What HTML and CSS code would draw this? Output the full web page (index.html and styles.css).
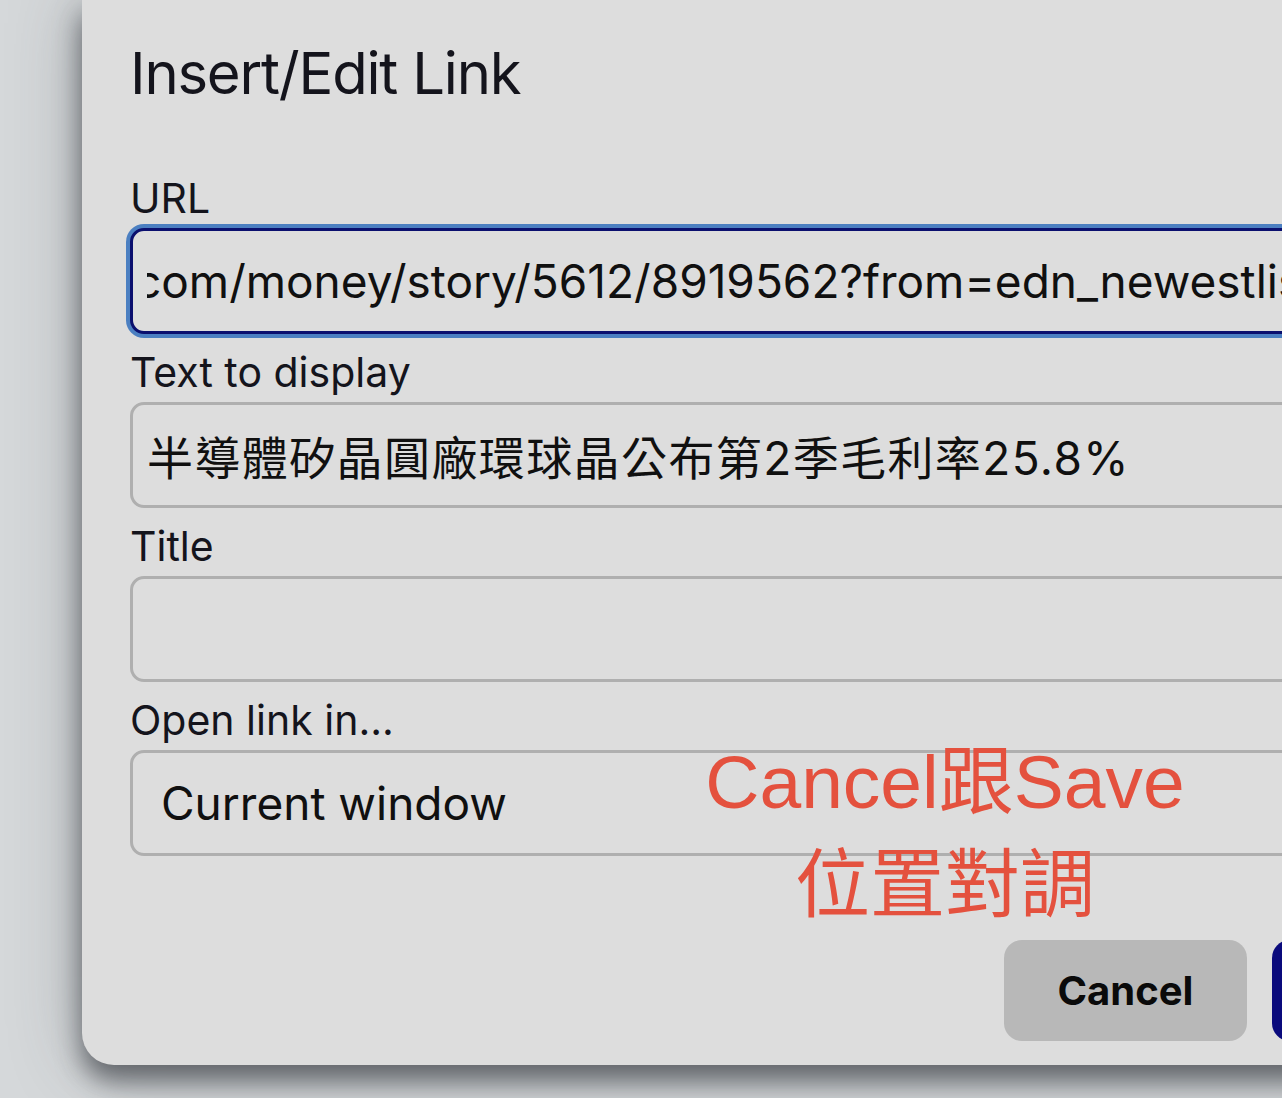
FILE: index.html
```html
<!DOCTYPE html>
<html lang="zh-Hant">
<head>
    <meta charset="UTF-8">
    <meta name="viewport" content="width=device-width, initial-scale=1.0">
    <title>Insert/Edit Link</title>
    <link rel="stylesheet" href="styles.css">
</head>
<body>
    <div class="stage">
        <div class="dialog">
            <h1 class="dialog-title">Insert/Edit Link</h1>

            <form class="link-form">
                <div class="field">
                    <label class="field-label" for="url">URL</label>
                    <div class="text-box is-focused" id="url">
                        <div class="text-clip"><span class="url-text">com/money/story/5612/8919562?from=edn_newestlist</span></div>
                    </div>
                </div>

                <div class="field">
                    <label class="field-label" for="display">Text to display</label>
                    <input class="text-box cjk-box" type="text" id="display" value="半導體矽晶圓廠環球晶公布第2季毛利率25.8%">
                </div>

                <div class="field">
                    <label class="field-label" for="title">Title</label>
                    <input class="text-box" type="text" id="title" value="">
                </div>

                <div class="field">
                    <label class="field-label" for="target">Open link in...</label>
                    <select class="text-box select-box" id="target">
                        <option>Current window</option>
                        <option>New window</option>
                    </select>
                </div>
            </form>

            <div class="dialog-footer">
                <button type="button" class="btn btn-cancel">Cancel</button>
                <button type="button" class="btn btn-save">Save</button>
            </div>
        </div>

        <!-- red note written over the screenshot -->
        <div class="note">Cancel跟Save<br>位置對調</div>
    </div>
</body>
</html>
```

FILE: styles.css
```css
body {
    margin: 0;
    padding: 0;
    background-color: #d5d8da;
    font-family: Inter, "Noto Sans CJK TC", sans-serif;
    color: #14141c;
    overflow: hidden;
}

.stage {
    position: relative;
    width: 1282px;
    height: 1098px;
    overflow: hidden;
}

.dialog {
    width: 1408px;
    margin-left: 82px;
    padding: 38px 48px 24px;
    box-sizing: border-box;
    background-color: #dddddd;
    border-radius: 0 0 32px 32px;
    box-shadow: 0 16px 26px rgba(40, 44, 50, 0.6), 0 0 70px rgba(60, 66, 72, 0.35);
}

.dialog-title {
    margin: 0;
    font-size: 58px;
    font-weight: 400;
    line-height: 70px;
    letter-spacing: -1.2px;
}

.link-form {
    display: flex;
    flex-direction: column;
    gap: 14px;
    margin-top: 66px;
}

.field {
    display: flex;
    flex-direction: column;
    gap: 6px;
}

.field-label {
    font-size: 41px;
    line-height: 48px;
}

.text-box {
    display: block;
    width: 100%;
    height: 106px;
    box-sizing: border-box;
    margin: 0;
    padding: 0 14px;
    background-color: #dddddd;
    border: 3px solid #afafaf;
    border-radius: 14px;
    font-family: Inter, "Noto Sans CJK TC", sans-serif;
    font-size: 46px;
    color: #101010;
    outline: none;
}

.cjk-box {
    letter-spacing: 1.4px;
}

.text-box.is-focused {
    border-color: #0a0f6e;
    box-shadow: 0 0 0 4px #4b7fc1;
    display: flex;
    align-items: center;
}

.text-clip {
    flex: 1;
    overflow: hidden;
    white-space: nowrap;
}

.url-text {
    display: inline-block;
    margin-left: -12px;
}

.select-box {
    appearance: none;
    -webkit-appearance: none;
    padding-left: 28px;
}

.dialog-footer {
    display: flex;
    justify-content: flex-end;
    gap: 25px;
    margin-top: 84px;
}

.btn {
    height: 101px;
    border: none;
    border-radius: 18px;
    font-family: Inter, sans-serif;
    font-size: 40px;
    font-weight: 700;
    cursor: pointer;
}

.btn-cancel {
    width: 243px;
    background-color: #b8b8b8;
    color: #0a0a0a;
}

.btn-save {
    width: 170px;
    background-color: #0a0a7c;
    color: #fff;
}

.note {
    position: absolute;
    left: 645px;
    top: 731px;
    width: 600px;
    text-align: center;
    font-family: "Liberation Sans", "Noto Sans CJK TC", sans-serif;
    font-size: 75px;
    line-height: 103px;
    color: #e4513e;
}
```
